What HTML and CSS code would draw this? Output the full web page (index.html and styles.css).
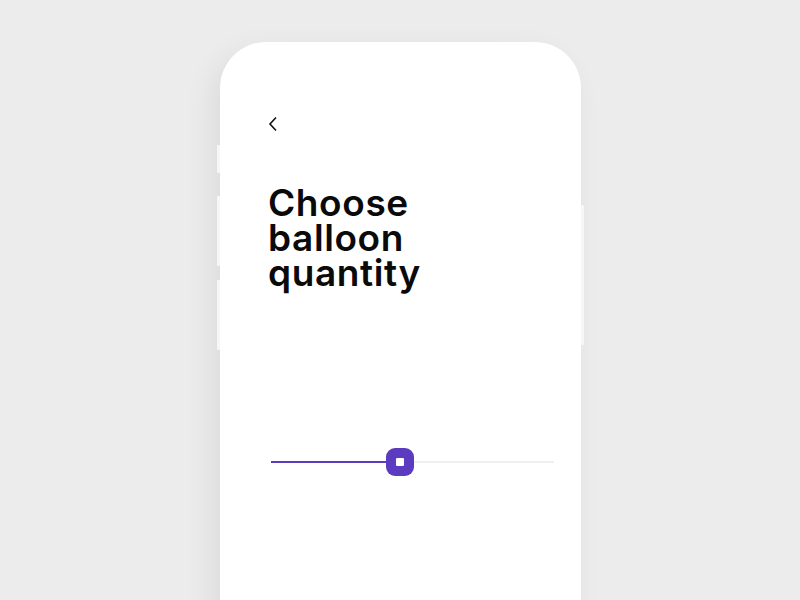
FILE: index.html
```html
<!DOCTYPE html>
<html lang="en">
  <head>
    <meta charset="UTF-8" />
    <meta name="viewport" content="width=device-width, initial-scale=1.0" />
    <title>Choose balloon quantity</title>
    <link rel="stylesheet" href="styles.css">
  </head>
  <body>
    <div class="phone">
      <span class="sideBtn mute"></span>
      <span class="sideBtn volUp"></span>
      <span class="sideBtn volDown"></span>
      <span class="sideBtn power"></span>
      <div class="screen">
        <button class="back">
          <svg width="10" height="16" viewBox="0 0 10 16">
            <path d="M8 1.5 L2 8 L8 14.5" fill="none" stroke="#111" stroke-width="1.6" />
          </svg>
        </button>
        <h1 class="title">
          <span>Choose</span>
          <span>balloon</span>
          <span>quantity</span>
        </h1>
        <div class="slider">
          <div class="track">
            <div class="fill" style="width: 42%"></div>
            <div class="thumb"><span></span></div>
          </div>
        </div>
      </div>
    </div>
  </body>
</html>
```

FILE: styles.css
```css
* {
  box-sizing: border-box;
}
body {
  margin: 0;
  height: 600px;
  overflow: hidden;
  background-color: #ececec;
  font-family: "Inter", "Noto Sans", sans-serif;
  display: flex;
  justify-content: center;
}
.phone {
  position: relative;
  width: 361px;
  height: 640px;
  margin-top: 42px;
  margin-left: 1px;
  background-color: #ffffff;
  border-radius: 46px 46px 0 0;
  box-shadow: -8px 10px 30px rgba(0, 0, 0, 0.07);
}
.sideBtn {
  position: absolute;
  width: 3px;
  background-color: #f7f7f7;
  border-radius: 1px;
}
.sideBtn.mute {
  left: -3px;
  top: 103px;
  height: 28px;
}
.sideBtn.volUp {
  left: -3px;
  top: 154px;
  height: 70px;
}
.sideBtn.volDown {
  left: -3px;
  top: 238px;
  height: 70px;
}
.sideBtn.power {
  right: -3px;
  top: 163px;
  height: 140px;
}
.screen {
  display: flex;
  flex-direction: column;
  padding: 74px 27px 0 48px;
}
.back {
  width: 10px;
  height: 16px;
  padding: 0;
  border: none;
  background: none;
  display: flex;
}
.title {
  margin: 53px 0 0;
  display: flex;
  flex-direction: column;
  font-size: 37px;
  line-height: 35px;
  font-weight: 600;
  color: #0a0a0a;
  letter-spacing: 0.6px;
}
.slider {
  margin-top: 171px;
  padding-left: 3px;
}
.track {
  position: relative;
  height: 2px;
  background-color: #efefef;
}
.fill {
  height: 2px;
  background-color: #5b3cc0;
}
.thumb {
  position: absolute;
  left: calc(42% - 4px);
  top: -13px;
  width: 28px;
  height: 28px;
  border-radius: 9px;
  background-color: #5b3cc0;
  display: flex;
  align-items: center;
  justify-content: center;
}
.thumb span {
  width: 8px;
  height: 8px;
  border-radius: 1px;
  background-color: #ffffff;
}
```
